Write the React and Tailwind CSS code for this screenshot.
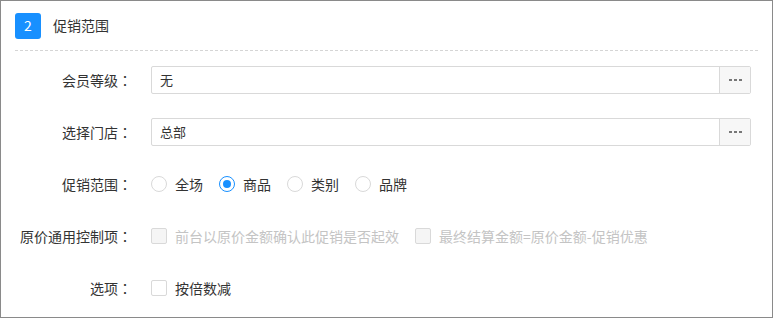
const font = { fontFamily: '"Noto Sans CJK SC", "Noto Sans", sans-serif' }

function Label({ children }) {
  return (
    <div className="w-[131px] shrink-0 text-right text-[14px] text-[#333]">
      {children}
      <span style={{ fontFamily: '"Noto Sans CJK JP", sans-serif' }}>：</span>
    </div>
  )
}

function PickerInput({ value }) {
  return (
    <div className="flex h-[28px] w-[600px] ml-[19px] border border-[#d9d9d9] rounded-[2px] bg-white">
      <div className="flex-1 flex items-center pl-[8px] text-[13px] text-[#333]">{value}</div>
      <button className="w-[31px] flex items-center justify-center gap-[2px] bg-[#f7f7f7] border-l border-[#d9d9d9]">
        <span className="w-[3px] h-[2px] bg-[#777]" />
        <span className="w-[3px] h-[2px] bg-[#777]" />
        <span className="w-[3px] h-[2px] bg-[#777]" />
      </button>
    </div>
  )
}

function Radio({ label, checked }) {
  return (
    <label className="flex items-center mr-[16px]">
      <span
        className={`w-[16px] h-[16px] rounded-full border bg-white flex items-center justify-center ${
          checked ? 'border-[#1890ff]' : 'border-[#d9d9d9]'
        }`}
      >
        {checked && <span className="w-[8px] h-[8px] rounded-full bg-[#1890ff]" />}
      </span>
      <span className="ml-[8px] text-[14px] text-[#333]">{label}</span>
    </label>
  )
}

function Checkbox({ label, disabled }) {
  return (
    <label className="flex items-center mr-[16px]">
      <span
        className={`w-[16px] h-[16px] rounded-[2px] border border-[#d9d9d9] ${
          disabled ? 'bg-[#f5f5f5]' : 'bg-white'
        }`}
      />
      <span className={`ml-[8px] text-[14px] ${disabled ? 'text-[#c4c4c4]' : 'text-[#333]'}`}>
        {label}
      </span>
    </label>
  )
}

export default function App() {
  return (
    <div className="w-[773px] h-[318px] bg-white border border-[#8a8a8a]" style={font}>
      {/* Header */}
      <div className="mx-[14px] h-[50px] flex items-center border-b border-dashed border-[#d5d5d5]">
        <div className="w-[26px] h-[26px] rounded-[3px] bg-[#1890ff] text-white text-[14px] flex items-center justify-center">
          2
        </div>
        <div className="ml-[12px] text-[14px] text-[#333]">促销范围</div>
      </div>

      <div className="pt-[3px]">
        <div className="h-[52px] flex items-center">
          <Label>会员等级</Label>
          <PickerInput value="无" />
        </div>
        <div className="h-[52px] flex items-center">
          <Label>选择门店</Label>
          <PickerInput value="总部" />
        </div>
        <div className="h-[52px] flex items-center">
          <Label>促销范围</Label>
          <div className="flex items-center ml-[19px]">
            <Radio label="全场" />
            <Radio label="商品" checked />
            <Radio label="类别" />
            <Radio label="品牌" />
          </div>
        </div>
        <div className="h-[52px] flex items-center">
          <Label>原价通用控制项</Label>
          <div className="flex items-center ml-[19px]">
            <Checkbox label="前台以原价金额确认此促销是否起效" disabled />
            <Checkbox label="最终结算金额=原价金额-促销优惠" disabled />
          </div>
        </div>
        <div className="h-[52px] flex items-center">
          <Label>选项</Label>
          <div className="flex items-center ml-[19px]">
            <Checkbox label="按倍数减" />
          </div>
        </div>
      </div>
    </div>
  )
}
